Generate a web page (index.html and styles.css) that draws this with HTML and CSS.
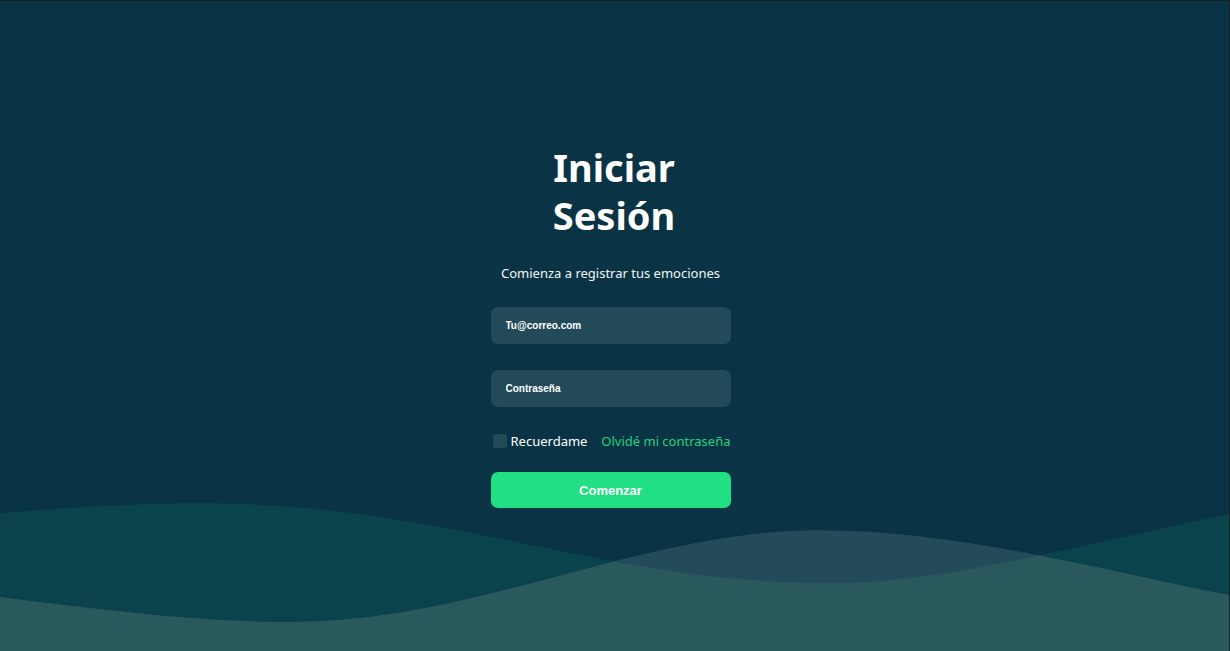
FILE: index.html
```html
<!DOCTYPE html>
<html lang="es">
<head>
<meta charset="utf-8">
<title>Iniciar Sesión</title>
<link rel="stylesheet" href="styles.css">
</head>
<body>
<div class="page">
  <svg class="waves" viewBox="0 0 1230 651" preserveAspectRatio="none" aria-hidden="true">
    <defs>
      <clipPath id="w1clip">
        <path d="M0,513 C70,507 140,503 200,503 C450,503 600,583 830,583 C950,583 1100,540 1230,514 L1230,651 L0,651 Z"/>
      </clipPath>
    </defs>
    <path fill="#0b434c" d="M0,513 C70,507 140,503 200,503 C450,503 600,583 830,583 C950,583 1100,540 1230,514 L1230,651 L0,651 Z"/>
    <path fill="#244b5a" d="M0,597 C100,610 200,622 290,622 C480,622 640,530 820,530 C960,530 1100,570 1230,595 L1230,651 L0,651 Z"/>
    <path fill="#29585d" clip-path="url(#w1clip)" d="M0,597 C100,610 200,622 290,622 C480,622 640,530 820,530 C960,530 1100,570 1230,595 L1230,651 L0,651 Z"/>
  </svg>

  <main class="card">
    <h1 class="title">Iniciar Sesión</h1>
    <p class="subtitle">Comienza a registrar tus emociones</p>
    <form class="form">
      <input class="field" type="email" placeholder="Tu@correo.com">
      <input class="field" type="password" placeholder="Contraseña">
      <div class="row">
        <label class="remember"><span class="check"></span>Recuerdame</label>
        <a class="forgot" href="#">Olvidé mi contraseña</a>
      </div>
      <button class="submit" type="button">Comenzar</button>
    </form>
  </main>
</div>
</body>
</html>
```

FILE: styles.css
```css
html, body {
  margin: 0;
  padding: 0;
  height: 100%;
}
body {
  background: #0a3445;
  overflow: hidden;
  font-family: "Noto Sans", "Open Sans", sans-serif;
  color: #ffffff;
}
.page {
  position: relative;
  box-sizing: border-box;
  height: 651px;
  border-top: 1px solid #1b1f21;
  border-right: 1px solid #1b1f21;
  overflow: hidden;
}
.waves {
  position: absolute;
  left: 0;
  top: 0;
  width: 100%;
  height: 100%;
  display: block;
}
.card {
  position: relative;
  width: 240px;
  margin: 0 auto;
  padding: 142px 8px 0 0;
  display: flex;
  flex-direction: column;
  align-items: center;
}
.title {
  margin: 0 0 0 7px;
  width: 150px;
  text-align: center;
  font-size: 38px;
  line-height: 48px;
  font-weight: 700;
}
.subtitle {
  margin: 24px 0 0;
  font-size: 13px;
  line-height: 20px;
  color: #f2f6f7;
}
.form {
  width: 240px;
  margin-top: 24px;
  display: flex;
  flex-direction: column;
}
.field {
  box-sizing: border-box;
  width: 240px;
  height: 37px;
  border: none;
  border-radius: 7px;
  background: #234a59;
  padding: 0 15px;
  font-family: "Liberation Sans", Arial, sans-serif;
  font-size: 10px;
  font-weight: 700;
  color: #fff;
  outline: none;
}
.field + .field {
  margin-top: 26px;
}
.field::placeholder {
  color: #ffffff;
  opacity: 1;
}
.row {
  margin-top: 25px;
  display: flex;
  align-items: center;
  justify-content: space-between;
  height: 18px;
}
.remember {
  display: flex;
  align-items: center;
  font-size: 13px;
  color: #ffffff;
  padding-left: 2px;
}
.check {
  width: 14px;
  height: 14px;
  border-radius: 3px;
  background: #234a59;
  margin-right: 4px;
}
.forgot {
  font-size: 13px;
  color: #22d27c;
  text-decoration: none;
}
.submit {
  margin-top: 22px;
  height: 36px;
  border: none;
  border-radius: 7px;
  background: #21e083;
  color: #fff;
  font-family: "Liberation Sans", Arial, sans-serif;
  font-weight: 700;
  font-size: 13px;
  cursor: pointer;
}
```
